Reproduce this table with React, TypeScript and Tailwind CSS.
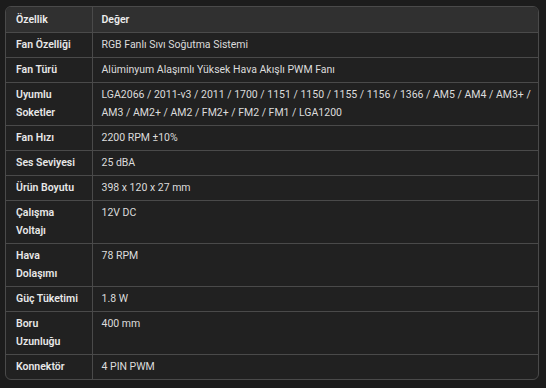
import React from 'react';

type Spec = { label: string; value: string };

const SPECS: Spec[] = [
  { label: 'Fan Özelliği', value: 'RGB Fanlı Sıvı Soğutma Sistemi' },
  { label: 'Fan Türü', value: 'Alüminyum Alaşımlı Yüksek Hava Akışlı PWM Fanı' },
  {
    label: 'Uyumlu Soketler',
    value:
      'LGA2066 / 2011-v3 / 2011 / 1700 / 1151 / 1150 / 1155 / 1156 / 1366 / AM5 / AM4 / AM3+ / AM3 / AM2+ / AM2 / FM2+ / FM2 / FM1 / LGA1200',
  },
  { label: 'Fan Hızı', value: '2200 RPM ±10%' },
  { label: 'Ses Seviyesi', value: '25 dBA' },
  { label: 'Ürün Boyutu', value: '398 x 120 x 27 mm' },
  { label: 'Çalışma Voltajı', value: '12V DC' },
  { label: 'Hava Dolaşımı', value: '78 RPM' },
  { label: 'Güç Tüketimi', value: '1.8 W' },
  { label: 'Boru Uzunluğu', value: '400 mm' },
  { label: 'Konnektör', value: '4 PIN PWM' },
];

const App: React.FC = () => {
  return (
    <div
      className="min-h-screen w-full bg-[#1c1c1c] pt-[6px] pl-[5px]"
      style={{ fontFamily: 'Roboto, "Noto Sans", sans-serif' }}
    >
      <div className="w-[534px] rounded-[6px] border border-[#4a4a4a] bg-[#212121] overflow-hidden">
        <table className="w-full table-fixed border-collapse text-[10.5px] leading-[18px] text-[#dcdcdc]">
          <colgroup>
            <col className="w-[86px]" />
            <col />
          </colgroup>
          <thead>
            <tr className="bg-[#303030] text-[#ececec]">
              <th className="border-b border-[#4a4a4a] pl-[10px] pr-[12px] py-[3.5px] text-left font-semibold align-top">
                Özellik
              </th>
              <th className="border-b border-l border-[#4a4a4a] pl-[9px] pr-1 py-[3.5px] text-left font-semibold align-top">
                Değer
              </th>
            </tr>
          </thead>
          <tbody>
            {SPECS.map((s, i) => {
              const last = i === SPECS.length - 1;
              return (
                <tr key={s.label}>
                  <td
                    className={`pl-[10px] pr-[12px] py-[3px] align-top font-semibold text-[#e8e8e8] ${
                      last ? '' : 'border-b border-[#4a4a4a]'
                    }`}
                  >
                    {s.label}
                  </td>
                  <td
                    className={`border-l border-[#4a4a4a] pl-[9px] pr-1 py-[3px] align-top ${
                      last ? '' : 'border-b'
                    }`}
                  >
                    {s.value}
                  </td>
                </tr>
              );
            })}
          </tbody>
        </table>
      </div>
    </div>
  );
};

export default App;
